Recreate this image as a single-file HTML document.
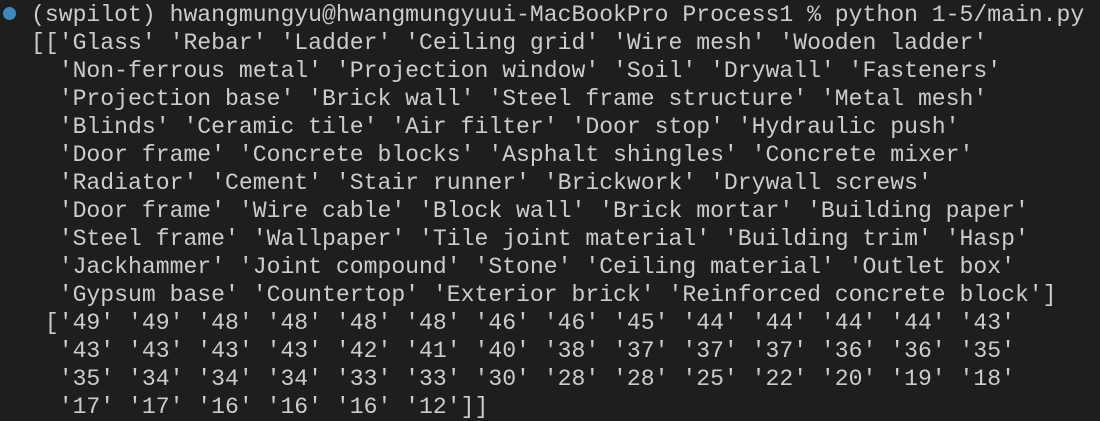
<!DOCTYPE html>
<html><head><style>
html,body{margin:0;padding:0;background:#1e1e1e;width:1100px;height:420px;overflow:hidden}
pre{margin:0;position:absolute;left:31px;top:1px;font-family:"Liberation Mono",monospace;font-size:23.1px;line-height:28px;color:#cccccc;white-space:pre}
.dot{position:absolute;left:3px;top:7px;width:13px;height:13px;border-radius:50%;background:#3a8bbd}
</style></head><body>
<div class="dot"></div>
<pre>(swpilot) hwangmungyu@hwangmungyuui-MacBookPro Process1 % python 1-5/main.py
[['Glass' 'Rebar' 'Ladder' 'Ceiling grid' 'Wire mesh' 'Wooden ladder'
  'Non-ferrous metal' 'Projection window' 'Soil' 'Drywall' 'Fasteners'
  'Projection base' 'Brick wall' 'Steel frame structure' 'Metal mesh'
  'Blinds' 'Ceramic tile' 'Air filter' 'Door stop' 'Hydraulic push'
  'Door frame' 'Concrete blocks' 'Asphalt shingles' 'Concrete mixer'
  'Radiator' 'Cement' 'Stair runner' 'Brickwork' 'Drywall screws'
  'Door frame' 'Wire cable' 'Block wall' 'Brick mortar' 'Building paper'
  'Steel frame' 'Wallpaper' 'Tile joint material' 'Building trim' 'Hasp'
  'Jackhammer' 'Joint compound' 'Stone' 'Ceiling material' 'Outlet box'
  'Gypsum base' 'Countertop' 'Exterior brick' 'Reinforced concrete block']
 ['49' '49' '48' '48' '48' '48' '46' '46' '45' '44' '44' '44' '44' '43'
  '43' '43' '43' '43' '42' '41' '40' '38' '37' '37' '37' '36' '36' '35'
  '35' '34' '34' '34' '33' '33' '30' '28' '28' '25' '22' '20' '19' '18'
  '17' '17' '16' '16' '16' '12']]</pre>
</body></html>
